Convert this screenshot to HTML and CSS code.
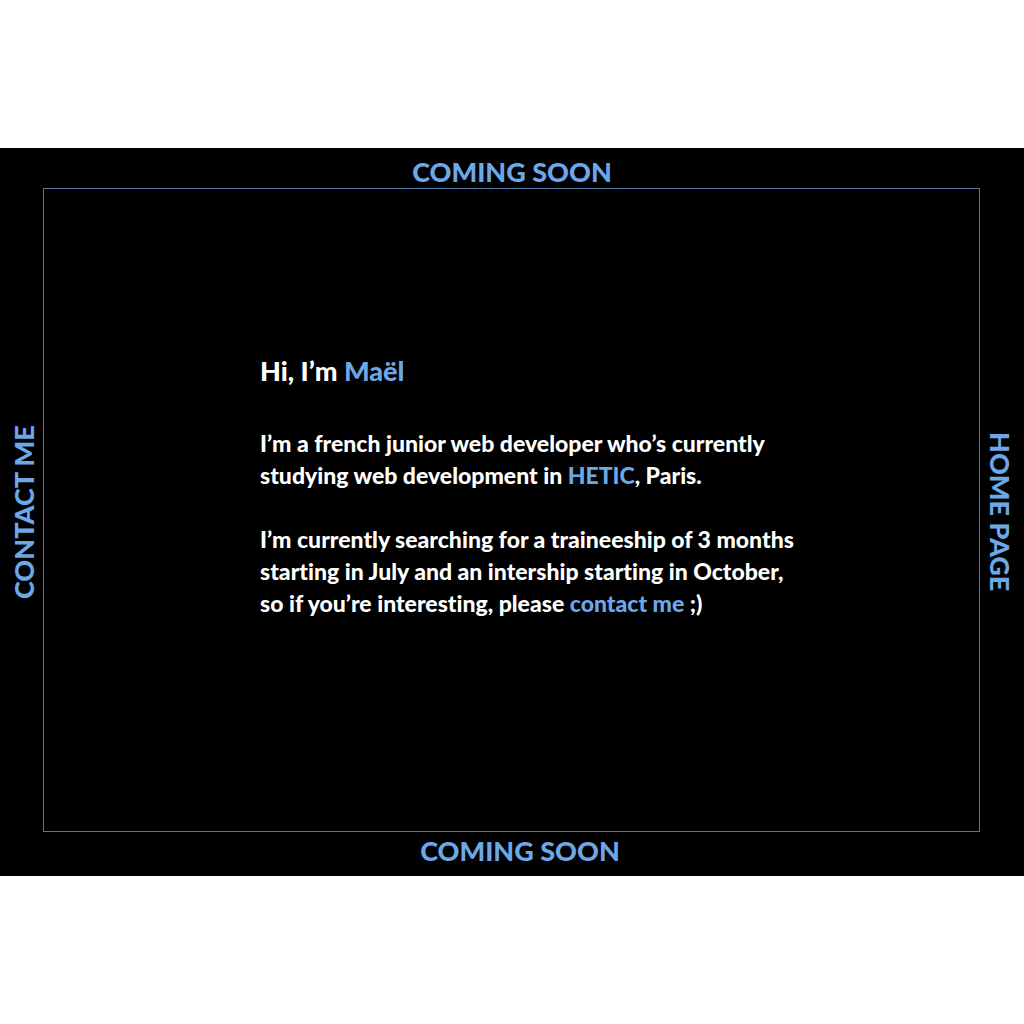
FILE: index.html
```html
<!DOCTYPE html>
<html lang="en">
<head>
<meta charset="utf-8">
<meta name="viewport" content="width=device-width, initial-scale=1">
<title>Maël</title>
<link rel="stylesheet" href="styles.css">
</head>
<body>
<div class="stage">
  <nav class="edge edge-top"><a href="#soon">COMING SOON</a></nav>
  <nav class="edge edge-left"><a href="#contact">CONTACT ME</a></nav>
  <main class="frame">
    <div class="intro">
      <h1>Hi, I’m <span class="accent">Maël</span></h1>
      <p>I’m a french junior web developer who’s currently<br>studying web development in <a href="#hetic">HETIC</a>, Paris.</p>
      <p>I’m currently searching for a traineeship of 3 months<br>starting in July and an intership starting in October,<br>so if you’re interesting, please <a href="#contact">contact me</a> ;)</p>
    </div>
  </main>
  <nav class="edge edge-right"><a href="#home">HOME PAGE</a></nav>
  <nav class="edge edge-bottom"><a href="#soon">COMING SOON</a></nav>
</div>
</body>
</html>
```
FILE: styles.css
```css
* {
  box-sizing: border-box;
}

body {
  margin: 0;
  min-height: 100vh;
  display: flex;
  flex-direction: column;
  justify-content: center;
  background: #fff;
  font-family: Lato, "Open Sans", sans-serif;
  font-weight: 900;
  font-variant-ligatures: none;
}

a,
.accent {
  color: #6ca8e8;
  text-decoration: none;
}

.stage {
  display: grid;
  grid-template-columns: 43px 1fr 44px;
  grid-template-rows: 40px 1fr 44px;
  grid-template-areas:
    "top top top"
    "left main right"
    "bottom bottom bottom";
  min-height: 728px;
  background: #000;
  color: #fff;
}

.edge {
  display: flex;
  align-items: center;
  justify-content: center;
  font-size: 27px;
  line-height: 32px;
  white-space: nowrap;
}

.edge-top {
  grid-area: top;
  padding-top: 8px;
}

.edge-bottom {
  grid-area: bottom;
  padding: 0 0 6px 16px;
}

.edge-left {
  grid-area: left;
  padding: 0 4px 4px 0;
  writing-mode: vertical-rl;
  transform: rotate(180deg);
}

.edge-right {
  grid-area: right;
  padding: 4px 4px 0 0;
  writing-mode: vertical-rl;
}

.frame {
  grid-area: main;
  display: flex;
  align-items: center;
  border: 1px solid #4c78a6;
  padding: 0 16px 46px 216px;
}

.intro {
  font-size: 23px;
  line-height: 32px;
}

h1 {
  margin: 0 0 40px;
  font-size: 27px;
  line-height: 32px;
  font-weight: 900;
}

p {
  margin: 0 0 32px;
  white-space: nowrap;
}

p:last-child {
  margin-bottom: 0;
}
```
